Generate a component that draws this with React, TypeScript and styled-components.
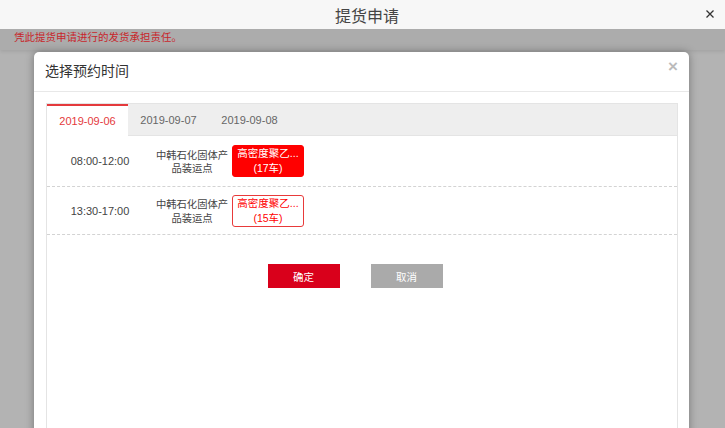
import React, { useState } from 'react'
import styled, { createGlobalStyle, css } from 'styled-components'

const GlobalStyle = createGlobalStyle`
  html, body {
    margin: 0;
    padding: 0;
    height: 100%;
    overflow: hidden;
  }
  body {
    font-family: "Liberation Sans", Arial, "Noto Sans CJK SC", sans-serif;
    background: #b3b3b3;
  }
  * { box-sizing: border-box; }
`

const Page = styled.div`
  position: relative;
  width: 725px;
  height: 428px;
  overflow: hidden;
  background: #b3b3b3;
`

const TopBar = styled.header`
  height: 29px;
  background: #f7f7f7;
  display: flex;
  align-items: center;
  justify-content: center;
  position: relative;
  color: #444;
  font-size: 16px;
  font-family: "Noto Sans CJK SC", sans-serif;
  padding-left: 9px;
`

const TopClose = styled.span`
  position: absolute;
  right: 11px;
  top: 10px;
  width: 8px;
  height: 8px;
  display: flex;
  cursor: pointer;
`

const Notice = styled.div`
  height: 21px;
  padding: 1px 0 0 14px;
  background: #acacac;
  color: #c8262b;
  font-size: 10.5px;
  line-height: 13px;
  font-family: "Noto Sans CJK SC", sans-serif;
  box-shadow: 0 2px 3px rgba(0, 0, 0, 0.08);
`

const Mask = styled.div`
  position: absolute;
  left: 0;
  right: 0;
  top: 52px;
  bottom: 0;
  padding-left: 34px;
`

const Modal = styled.div`
  width: 655px;
  height: 420px;
  background: #fff;
  border-radius: 5px 5px 0 0;
  box-shadow: 0 0 9px rgba(0, 0, 0, 0.35);
  display: flex;
  flex-direction: column;
`

const ModalHead = styled.div`
  height: 40px;
  flex: none;
  display: flex;
  align-items: center;
  justify-content: space-between;
  padding: 0 11px 3px 11px;
  border-bottom: 1px solid #e8e8e8;
`

const ModalTitle = styled.h3`
  margin: 0;
  font-weight: normal;
  font-size: 14px;
  color: #333;
  font-family: "Noto Sans CJK SC", sans-serif;
`

const ModalClose = styled.span`
  font-size: 17px;
  font-weight: bold;
  color: #bbb;
  margin-top: -6px;
  margin-right: 0;
  cursor: pointer;
`

const ModalBody = styled.div`
  flex: 1;
  padding: 11px 11px 0 12px;
  display: flex;
  flex-direction: column;
`

const Panel = styled.div`
  flex: 1;
  border: 1px solid #e4e4e4;
  border-bottom: none;
`

const TabBar = styled.div`
  display: flex;
  height: 32px;
  background: #eeeeee;
  border-bottom: 1px solid #e4e4e4;
`

const Tab = styled.div<{ $active?: boolean }>`
  width: 81px;
  display: flex;
  align-items: center;
  justify-content: center;
  font-size: 11px;
  color: #666;
  cursor: pointer;
  border-top: 2px solid transparent;
  padding-bottom: 1px;
  ${(p) =>
    p.$active &&
    css`
      background: #fff;
      color: #e4393c;
      border-top-color: #e4393c;
      height: 32px;
    `}
`

const Row = styled.div<{ $h: number }>`
  display: flex;
  align-items: center;
  height: ${(p) => p.$h}px;
  border-bottom: 1px dashed #d3d3d3;
`

const TimeCell = styled.div`
  width: 106px;
  text-align: center;
  font-size: 11px;
  color: #444;
`

const PlaceCell = styled.div`
  width: 78px;
  text-align: center;
  font-size: 10.3px;
  line-height: 13.5px;
  color: #444;
  font-family: "Noto Sans CJK SC", sans-serif;
`

const Badge = styled.div<{ $filled?: boolean }>`
  width: 72px;
  height: 32px;
  margin-left: 1px;
  border: 1px solid #f00;
  border-radius: 3px;
  display: flex;
  flex-direction: column;
  align-items: center;
  justify-content: center;
  font-size: 10.5px;
  line-height: 15px;
  cursor: pointer;
  ${(p) =>
    p.$filled
      ? css`
          background: #ff0000;
          color: #fff;
        `
      : css`
          background: #fff;
          color: #f00;
          border-color: #e83a3a;
        `}
`

const Actions = styled.div`
  display: flex;
  justify-content: center;
  gap: 31px;
  padding: 29px 14px 0 0;
`

const Btn = styled.button<{ $primary?: boolean }>`
  width: 72px;
  height: 24px;
  border: none;
  color: #fff;
  font-size: 10.5px;
  font-family: "Noto Sans CJK SC", sans-serif;
  background: ${(p) => (p.$primary ? '#d9001b' : '#aaaaaa')};
  cursor: pointer;
`

const dates = ['2019-09-06', '2019-09-07', '2019-09-08']

const slots = [
  { time: '08:00-12:00', cars: 17, h: 51 },
  { time: '13:30-17:00', cars: 15, h: 48 },
]

export default function App() {
  const [tab, setTab] = useState(0)
  const [picked, setPicked] = useState(0)

  return (
    <Page>
      <GlobalStyle />
      <TopBar>
        提货申请
        <TopClose>
          <svg width="8" height="8" viewBox="0 0 8 8">
            <path d="M0.5 0.5 L7.5 7.5 M7.5 0.5 L0.5 7.5" stroke="#333" strokeWidth="1.3" />
          </svg>
        </TopClose>
      </TopBar>
      <Notice>凭此提货申请进行的发货承担责任。</Notice>
      <Mask>
        <Modal>
          <ModalHead>
            <ModalTitle>选择预约时间</ModalTitle>
            <ModalClose>×</ModalClose>
          </ModalHead>
          <ModalBody>
            <Panel>
              <TabBar>
                {dates.map((d, i) => (
                  <Tab key={d} $active={tab === i} onClick={() => setTab(i)}>
                    {d}
                  </Tab>
                ))}
              </TabBar>
              {slots.map((s, i) => (
                <Row key={s.time} $h={s.h}>
                  <TimeCell>{s.time}</TimeCell>
                  <PlaceCell>
                    中韩石化固体产
                    <br />
                    品装运点
                  </PlaceCell>
                  <Badge $filled={picked === i} onClick={() => setPicked(i)}>
                    <span>高密度聚乙...</span>
                    <span>({s.cars}车)</span>
                  </Badge>
                </Row>
              ))}
              <Actions>
                <Btn $primary>确定</Btn>
                <Btn>取消</Btn>
              </Actions>
            </Panel>
          </ModalBody>
        </Modal>
      </Mask>
    </Page>
  )
}
